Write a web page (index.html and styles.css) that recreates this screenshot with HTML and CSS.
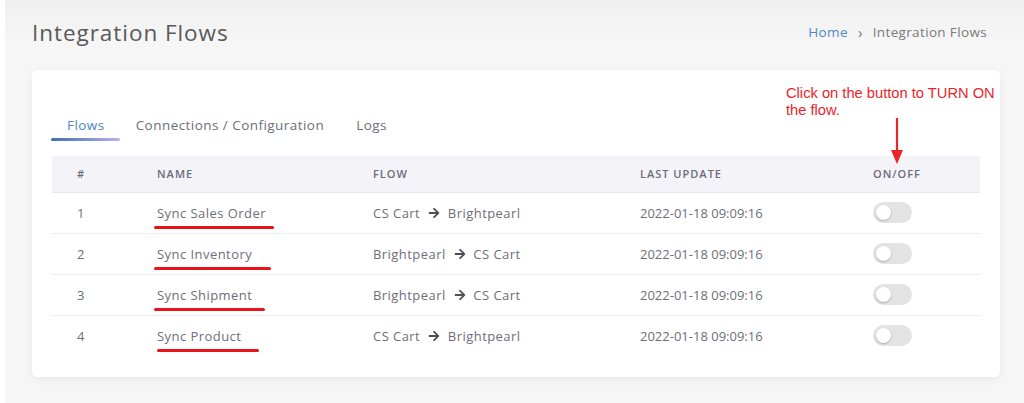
FILE: index.html
```
<!DOCTYPE html>
<html>
<head>
<meta charset="utf-8">
<link rel="stylesheet" href="styles.css">
</head>
<body>
<div class="page">
  <header class="page-head">
    <h1 class="title">Integration Flows</h1>
    <nav class="crumbs"><a class="crumb-link">Home</a><span class="crumb-sep">›</span><span class="crumb-cur">Integration Flows</span></nav>
  </header>
  <section class="card">
    <div class="note">Click on the button to TURN ON<br>the flow.</div>
    <svg class="note-arrow" width="20" height="48" viewBox="0 0 20 48"><line x1="10" y1="0" x2="10" y2="34" stroke="#e8262a" stroke-width="2.2"/><polygon points="4,32 16,32 10,46" fill="#e8262a"/></svg>
    <ul class="tabs">
      <li class="tab active">Flows</li>
      <li class="tab">Connections / Configuration</li>
      <li class="tab">Logs</li>
    </ul>
    <table class="flows">
      <thead>
        <tr><th class="c1">#</th><th class="c2">NAME</th><th class="c3">FLOW</th><th class="c4">LAST UPDATE</th><th class="c5">ON/OFF</th></tr>
      </thead>
      <tbody>
        <tr><td class="num">1</td><td class="txt"><span class="name">Sync Sales Order<i class="mark"></i></span></td><td class="txt">CS Cart <svg class="arr" viewBox="0 0 448 512"><path d="M190.5 66.9l22.2-22.2c9.4-9.4 24.6-9.4 33.9 0L441 239c9.4 9.4 9.4 24.6 0 33.9L246.6 467.3c-9.4 9.4-24.6 9.4-33.9 0l-22.2-22.2c-9.5-9.5-9.3-25 .4-34.3L311.4 296H24c-13.3 0-24-10.7-24-24v-32c0-13.3 10.7-24 24-24h287.4L190.9 101.2c-9.8-9.3-10-24.8-.4-34.3z"/></svg> Brightpearl</td><td class="num">2022-01-18 09:09:16</td><td><span class="toggle"><span class="knob"></span></span></td></tr>
        <tr><td class="num">2</td><td class="txt"><span class="name">Sync Inventory<i class="mark"></i></span></td><td class="txt">Brightpearl <svg class="arr" viewBox="0 0 448 512"><path d="M190.5 66.9l22.2-22.2c9.4-9.4 24.6-9.4 33.9 0L441 239c9.4 9.4 9.4 24.6 0 33.9L246.6 467.3c-9.4 9.4-24.6 9.4-33.9 0l-22.2-22.2c-9.5-9.5-9.3-25 .4-34.3L311.4 296H24c-13.3 0-24-10.7-24-24v-32c0-13.3 10.7-24 24-24h287.4L190.9 101.2c-9.8-9.3-10-24.8-.4-34.3z"/></svg> CS Cart</td><td class="num">2022-01-18 09:09:16</td><td><span class="toggle"><span class="knob"></span></span></td></tr>
        <tr><td class="num">3</td><td class="txt"><span class="name">Sync Shipment<i class="mark"></i></span></td><td class="txt">Brightpearl <svg class="arr" viewBox="0 0 448 512"><path d="M190.5 66.9l22.2-22.2c9.4-9.4 24.6-9.4 33.9 0L441 239c9.4 9.4 9.4 24.6 0 33.9L246.6 467.3c-9.4 9.4-24.6 9.4-33.9 0l-22.2-22.2c-9.5-9.5-9.3-25 .4-34.3L311.4 296H24c-13.3 0-24-10.7-24-24v-32c0-13.3 10.7-24 24-24h287.4L190.9 101.2c-9.8-9.3-10-24.8-.4-34.3z"/></svg> CS Cart</td><td class="num">2022-01-18 09:09:16</td><td><span class="toggle"><span class="knob"></span></span></td></tr>
        <tr><td class="num">4</td><td class="txt"><span class="name">Sync Product<i class="mark"></i></span></td><td class="txt">CS Cart <svg class="arr" viewBox="0 0 448 512"><path d="M190.5 66.9l22.2-22.2c9.4-9.4 24.6-9.4 33.9 0L441 239c9.4 9.4 9.4 24.6 0 33.9L246.6 467.3c-9.4 9.4-24.6 9.4-33.9 0l-22.2-22.2c-9.5-9.5-9.3-25 .4-34.3L311.4 296H24c-13.3 0-24-10.7-24-24v-32c0-13.3 10.7-24 24-24h287.4L190.9 101.2c-9.8-9.3-10-24.8-.4-34.3z"/></svg> Brightpearl</td><td class="num">2022-01-18 09:09:16</td><td><span class="toggle"><span class="knob"></span></span></td></tr>
      </tbody>
    </table>
  </section>
</div>
</body>
</html>
```
FILE: styles.css
```
html, body { margin: 0; padding: 0; }
body {
  background: #ffffff;
  font-family: "Open Sans", "DejaVu Sans", sans-serif;
  color: #6b6b75;
  width: 1024px;
  height: 403px;
  overflow: hidden;
}
.page {
  margin-left: 5px;
  height: 403px;
  background: linear-gradient(180deg, #efefef 0px, #f6f6f6 40px, #f6f6f6 100%);
  padding: 0 24px 0 27px;
  box-sizing: border-box;
}
.page-head {
  display: flex;
  align-items: center;
  justify-content: space-between;
  height: 70px;
  padding-right: 13px;
}
.title {
  margin: 0;
  font-weight: 400;
  font-size: 22.5px;
  letter-spacing: 0.95px;
  color: #595959;
  padding-bottom: 5px;
}
.crumbs {
  font-size: 13.5px;
  letter-spacing: 0.35px;
  display: flex;
  align-items: center;
  gap: 10px;
  padding-bottom: 7px;
}
.crumb-link { color: #4f86c4; }
.crumb-sep { color: #777; font-size: 15px; }
.crumb-cur { color: #7a7a7a; }
.card {
  position: relative;
  background: #fff;
  border-radius: 5px;
  box-shadow: 0 2px 10px rgba(0,0,0,0.06);
  width: 968px;
  height: 307px;
  box-sizing: border-box;
  padding: 40px 20px 20px 19px;
}
.note {
  position: absolute;
  left: 754px;
  top: 15px;
  font-family: "Liberation Sans", Arial, sans-serif;
  font-size: 14.7px;
  line-height: 17px;
  color: #e8262a;
}
.note-arrow {
  position: absolute;
  left: 855px;
  top: 48px;
}
.tabs {
  list-style: none;
  margin: 0;
  padding: 0;
  display: flex;
  height: 32px;
  margin-bottom: 14px;
}
.tab {
  font-size: 13.5px;
  letter-spacing: 0.45px;
  color: #6e6e78;
  padding: 6px 16px 0 16px;
  position: relative;
}
.tab.active { color: #4f86c4; padding-right: 15px; }
.tab.active::after {
  content: "";
  position: absolute;
  left: 0;
  right: 0;
  bottom: 1px;
  height: 3px;
  border-radius: 2px;
  background: linear-gradient(90deg, #3f6fb3, #b9b3e8);
}
.flows {
  width: 928px;
  margin-left: 1px;
  border-collapse: collapse;
  font-size: 13px;
}
.flows th, .flows td {
  text-align: left;
  padding: 0 0 0 25px;
}
.flows thead tr {
  background: #f3f3f8;
  height: 36px;
  border-bottom: 1px solid #e6e6ee;
}
.flows th {
  font-size: 11px;
  font-weight: 600;
  letter-spacing: 1px;
  color: #6c6c78;
}
.c1 { width: 55px; }
.c2 { width: 191px; }
.c3 { width: 242px; }
.c4 { width: 208px; }
.flows tbody tr { height: 41px; border-bottom: 1px solid #ececf3; }
.flows tbody tr:last-child { border-bottom: none; }
.flows td { color: #6e6e78; }
.flows td.txt { letter-spacing: 0.45px; }
.name { position: relative; display: inline-block; }
.mark {
  position: absolute;
  left: -3px;
  width: 120px;
  top: 22px;
  height: 3px;
  border-radius: 2px;
  background: #e8141b;
}
.flows tbody tr:nth-child(2) .mark { width: 117px; }
.flows tbody tr:nth-child(3) .mark { width: 111px; }
.flows tbody tr:nth-child(4) .mark { left: 0; width: 102px; }
.arr {
  width: 12px;
  height: 12px;
  fill: #4e4e58;
  vertical-align: -1px;
  margin: 0 4px;
}
.toggle {
  display: inline-block;
  width: 39px;
  height: 21px;
  border-radius: 11px;
  background: #e3e3e3;
  position: relative;
  vertical-align: middle;
}
.knob {
  position: absolute;
  left: 3px;
  top: 3px;
  width: 15px;
  height: 15px;
  border-radius: 50%;
  background: #fff;
  box-shadow: 0 1px 2px rgba(0,0,0,0.25);
}
```
